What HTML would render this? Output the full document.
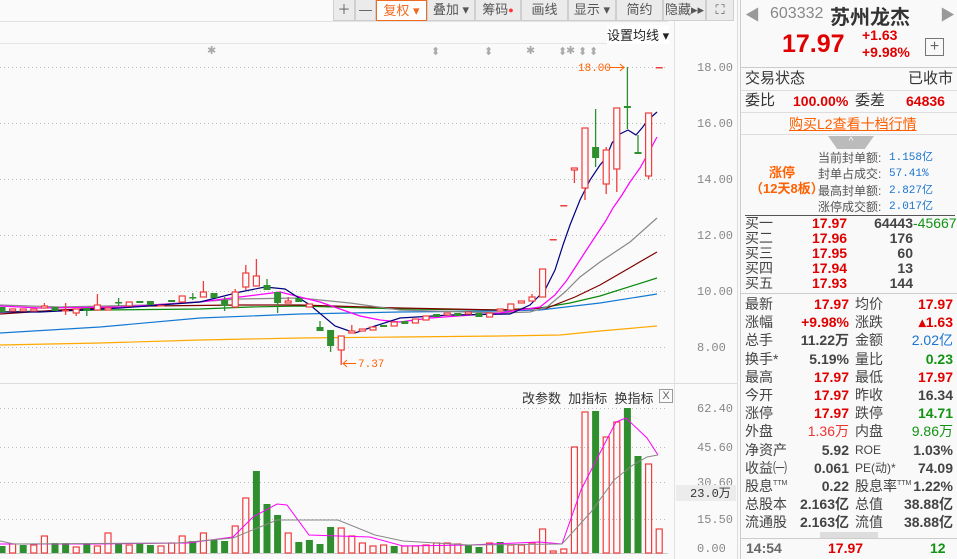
<!DOCTYPE html>
<html><head><meta charset="utf-8">
<style>
*{margin:0;padding:0;box-sizing:border-box}
body{width:957px;height:559px;overflow:hidden;background:#fafafa;font-family:"Liberation Sans","Noto Sans CJK SC",sans-serif;position:relative;color:#333}
.a{position:absolute;white-space:nowrap}
.tb{position:absolute;top:0;height:21px;background:#ebebeb;border:1px solid #cfcfcf;border-top:none;font-size:13px;color:#555;text-align:center;line-height:20px}
.r{color:#e00000}.g{color:#139313}.b{color:#1a74d0}.o{color:#ff6000}
.rp{font-size:14px;line-height:18px}
.m{font-family:"Liberation Mono","Noto Sans CJK SC",monospace}
.row{position:absolute;left:745px;width:208px;height:18px;font-size:14px;line-height:18px;color:#444;white-space:nowrap}
.row>span{position:absolute;top:0}
.row .sp{position:relative;top:-6px;font-size:7px;line-height:7px}
.l1{left:0}.v1{right:104px;font-weight:bold}.l2{left:110px}.v2{right:0;font-weight:bold}
</style></head><body>
<svg class="a" style="left:0;top:0" width="740" height="559">
<line x1="0" y1="21.5" x2="668" y2="21.5" stroke="#e2e2e2"/>
<line x1="0" y1="43.5" x2="668" y2="43.5" stroke="#e6e6e6"/>
<line x1="674.5" y1="21" x2="674.5" y2="559" stroke="#e2e2e2"/>
<line x1="0" y1="383.5" x2="740" y2="383.5" stroke="#dcdcdc"/>
<g stroke="#bbb" stroke-dasharray="1,3">
<line x1="0" y1="67.5" x2="668" y2="67.5"/><line x1="0" y1="123.5" x2="668" y2="123.5"/><line x1="0" y1="179.5" x2="668" y2="179.5"/><line x1="0" y1="235.5" x2="668" y2="235.5"/><line x1="0" y1="291.5" x2="668" y2="291.5"/><line x1="0" y1="347.5" x2="668" y2="347.5"/>
<line x1="0" y1="408.5" x2="668" y2="408.5"/><line x1="0" y1="447.5" x2="668" y2="447.5"/><line x1="0" y1="482.5" x2="668" y2="482.5"/><line x1="0" y1="519.5" x2="668" y2="519.5"/>
</g>
<line x1="0" y1="553.5" x2="668" y2="553.5" stroke="#ccc"/>
<g fill="none" stroke-width="1.2">
<polyline stroke="#ffa800" points="0,345 100,343 200,340 300,338 400,337 500,336 560,335 600,331 657,326"/>
<polyline stroke="#1479d4" points="0,333 100,327 200,318 300,314 400,312 500,311 540,310 600,303 657,294"/>
<polyline stroke="#0a8a0a" points="0,312 100,310 200,309 250,307 300,306 400,309 500,310 540,308 570,303 600,296 657,278"/>
<polyline stroke="#800000" points="0,314 60,310 150,306 240,305 300,305 400,308 500,310 547,308 575,297 600,285 657,252"/>
<polyline stroke="#888" points="0,305 60,307 150,305 240,299 300,298 350,303 400,310 500,313 530,312 547,307 565,292 580,277 600,262 630,242 657,218"/>
<polyline stroke="#ff00ff" points="0,306 40,308 120,307 200,302 240,297 280,292 320,302 360,316 380,320 400,322 430,318 500,313 540,307 555,295 567,280 580,260 593,240 605,222 613,208 622,195 630,182 640,168 650,150 657,137"/>
<polyline stroke="#000080" points="0,312 40,312 120,308 200,302 240,292 265,287 285,289 310,305 335,326 355,333 375,326 400,318 450,315 510,314 530,305 545,290 555,270 563,245 570,225 580,200 590,180 600,165 606,158 612,143 620,134 628,130 636,135 642,128 648,120 657,112"/>
</g>
<g id="cd"></g>
<g id="vb"></g>
<polyline fill="none" stroke="#ff00ff" points="0,544 94,544 188,543 233,537 253,517 277,504 287,505 309,535 338,536 370,537 403,546 469,545 539,542 562,544 581,490 605,443 616,422 626,418 647,438 658,455"/>
<polyline fill="none" stroke="#888" points="0,541 14,544 178,543 233,538 277,520 338,520 375,535 403,541 469,545 562,544 591,512 614,480 633,465 647,457 658,455"/>
<g fill="#aaa" font-size="11">
<text x="207" y="54">✱</text><text x="431" y="55">⬍</text><text x="484" y="55">⬍</text><text x="526" y="54">✱</text><text x="558" y="55">⬍</text><text x="566" y="54">✱</text><text x="578" y="55">⬍</text><text x="589" y="55">⬍</text>
</g>
<text x="578" y="71" fill="#ff6000" font-size="11" font-family="Liberation Mono">18.00</text>
<path d="M610 67.5H624M620 64L624 67.5L620 71" stroke="#ff6000" fill="none"/>
<path d="M343 363.5H356M347 360L343 363.5L347 367" stroke="#ff6000" fill="none"/>
<text x="358" y="367" fill="#ff6000" font-size="11" font-family="Liberation Mono">7.37</text>
<g fill="#888" font-size="12" font-family="Liberation Mono">
<text x="697" y="71">18.00</text><text x="697" y="127">16.00</text><text x="697" y="183">14.00</text><text x="697" y="239">12.00</text><text x="697" y="295">10.00</text><text x="697" y="351">8.00</text>
<text x="697" y="412">62.40</text><text x="697" y="451">45.60</text><text x="697" y="486">30.60</text><text x="697" y="523">15.50</text><text x="697" y="552">0.00</text>
</g>
<rect x="676" y="485" width="60" height="16" fill="#ececec"/>
<text x="690" y="497" fill="#333" font-size="12" font-family="Liberation Mono">23.0万</text>
</svg>
<div class="tb" style="left:333px;width:22px">＋</div>
<div class="tb" style="left:355px;width:21px">—</div>
<div class="tb" style="left:376px;width:51px;background:#fff;border:1px solid #f06a20;color:#f06a20">复权 ▾</div>
<div class="tb" style="left:427px;width:48px">叠加 ▾</div>
<div class="tb" style="left:475px;width:46px">筹码<span style="color:#f33;font-size:9px;vertical-align:top">●</span></div>
<div class="tb" style="left:521px;width:47px">画线</div>
<div class="tb" style="left:568px;width:48px">显示 ▾</div>
<div class="tb" style="left:616px;width:47px">简约</div>
<div class="tb" style="left:663px;width:43px">隐藏▸▸</div>
<div class="tb" style="left:706px;width:28px">⛶</div>
<div class="a" style="left:607px;top:25px;font-size:13px;color:#222;background:#fff">设置均线 ▾</div>
<div class="a" style="left:522px;top:388px;font-size:13px;color:#333">改参数&nbsp; 加指标&nbsp; 换指标</div>
<div class="a" style="left:659px;top:389px;width:14px;height:14px;border:1px solid #999;font-size:11px;line-height:12px;text-align:center;color:#666">X</div>
<div class="a" style="left:737px;top:0;width:220px;height:559px;background:#f9f9f9;border-left:1px solid #ddd"></div>
<div class="a" style="left:740px;top:0;width:1px;height:559px;background:#ccc"></div>
<div class="a" style="left:745px;top:4px;font-size:15px;color:#999">◀</div>
<div class="a" style="left:940px;top:4px;font-size:15px;color:#999">▶</div>
<div class="a" style="left:770px;top:5px;font-size:16px;color:#888">603332</div>
<div class="a" style="left:830px;top:1px;font-size:20px;font-weight:bold;color:#333">苏州龙杰</div>
<div class="a r" style="left:782px;top:30px;font-size:25px;font-weight:bold">17.97</div>
<div class="a r" style="left:862px;top:27px;font-size:14px;font-weight:bold">+1.63</div>
<div class="a r" style="left:862px;top:44px;font-size:14px;font-weight:bold">+9.98%</div>
<div class="a" style="left:925px;top:38px;width:19px;height:18px;border:1px solid #777;color:#666;font-size:16px;line-height:15px;text-align:center">+</div>
<div class="a" style="left:741px;top:67px;width:216px;height:1px;background:#ccc"></div>
<div class="a rp" style="left:745px;top:70px;font-size:15px">交易状态</div>
<div class="a rp" style="left:908px;top:70px;font-size:15px">已收市</div>
<div class="a" style="left:741px;top:90px;width:216px;height:1px;background:#ddd"></div>
<div class="a rp" style="left:745px;top:92px;font-size:15px">委比</div>
<div class="a rp r" style="left:793px;top:92px;font-weight:bold">100.00%</div>
<div class="a rp" style="left:855px;top:92px;font-size:15px">委差</div>
<div class="a rp r" style="left:906px;top:92px;font-weight:bold">64836</div>
<div class="a" style="left:741px;top:112px;width:216px;height:1px;background:#ddd"></div>
<div class="a o" style="left:789px;top:114px;font-size:14px;text-decoration:underline">购买L2查看十档行情</div>
<div class="a" style="left:741px;top:134px;width:216px;height:1px;background:#ddd"></div>
<div class="a" style="left:828px;top:136px;width:46px;height:13px;background:#bbb;clip-path:polygon(0 0,100% 0,80% 100%,20% 100%);color:#fff;font-size:10px;text-align:center;line-height:12px">^</div>
<div class="a o" style="left:769px;top:162px;font-size:13px;font-weight:bold">涨停</div>
<div class="a o" style="left:750px;top:178px;font-size:13px;font-weight:bold">（12天8板）</div>
<div class="a" style="left:818px;top:150px;font-size:12px;line-height:16.3px;color:#555">当前封单额:<br>封单占成交:<br>最高封单额:<br>涨停成交额:</div>
<div class="a b m" style="left:889px;top:150px;font-size:11px;line-height:16.3px">1.158亿<br>57.41%<br>2.827亿<br>2.017亿</div>
<div class="a" style="left:745px;top:215px;width:210px;height:1px;background:#555"></div>
<div class="a" style="left:745px;top:216px;font-size:14px;line-height:15px;color:#444">买一<br>买二<br>买三<br>买四<br>买五</div>
<div class="a r" style="left:812px;top:216px;font-size:14px;line-height:15px;font-weight:bold">17.97<br>17.96<br>17.95<br>17.94<br>17.93</div>
<div class="a" style="left:873px;top:216px;font-size:14px;line-height:15px;font-weight:bold;color:#444;text-align:right;width:40px">64443<br>176<br>60<br>13<br>144</div>
<div class="a g" style="left:913px;top:216px;font-size:14px;line-height:15px">-45667</div>
<div class="a" style="left:741px;top:293px;width:216px;height:1px;background:#ccc"></div>
<div class="row" style="top:295px"><span class="l1">最新</span><span class="v1 r">17.97</span><span class="l2">均价</span><span class="v2 r">17.97</span></div>
<div class="row" style="top:313px"><span class="l1">涨幅</span><span class="v1 r">+9.98%</span><span class="l2">涨跌</span><span class="v2 r">▴1.63</span></div>
<div class="row" style="top:331px"><span class="l1">总手</span><span class="v1">11.22万</span><span class="l2">金额</span><span class="v2 b" style="font-weight:normal">2.02亿</span></div>
<div class="row" style="top:350px"><span class="l1">换手*</span><span class="v1">5.19%</span><span class="l2">量比</span><span class="v2 g">0.23</span></div>
<div class="row" style="top:368px"><span class="l1">最高</span><span class="v1 r">17.97</span><span class="l2">最低</span><span class="v2 r">17.97</span></div>
<div class="row" style="top:386px"><span class="l1">今开</span><span class="v1 r">17.97</span><span class="l2">昨收</span><span class="v2">16.34</span></div>
<div class="row" style="top:404px"><span class="l1">涨停</span><span class="v1 r">17.97</span><span class="l2">跌停</span><span class="v2 g">14.71</span></div>
<div class="row" style="top:422px"><span class="l1">外盘</span><span class="v1" style="color:#e33;font-weight:normal">1.36万</span><span class="l2">内盘</span><span class="v2 g" style="font-weight:normal">9.86万</span></div>
<div class="row" style="top:441px"><span class="l1">净资产</span><span class="v1">5.92</span><span class="l2" style="font-size:12px">ROE</span><span class="v2">1.03%</span></div>
<div class="row" style="top:459px"><span class="l1">收益㈠</span><span class="v1">0.061</span><span class="l2" style="font-size:12px">PE(动)*</span><span class="v2">74.09</span></div>
<div class="row" style="top:477px"><span class="l1">股息<span class="sp">TTM</span></span><span class="v1">0.22</span><span class="l2">股息率<span class="sp">TTM</span></span><span class="v2">1.22%</span></div>
<div class="row" style="top:495px"><span class="l1">总股本</span><span class="v1">2.163亿</span><span class="l2">总值</span><span class="v2">38.88亿</span></div>
<div class="row" style="top:513px"><span class="l1">流通股</span><span class="v1">2.163亿</span><span class="l2">流值</span><span class="v2">38.88亿</span></div>
<div class="a" style="left:820px;top:532px;width:58px;height:6px;background:#ddd"></div>
<div class="a" style="left:741px;top:538px;width:216px;height:1px;background:#ccc"></div>
<div class="a" style="left:746px;top:540px;font-size:14px;font-weight:bold;color:#666">14:54</div>
<div class="a r" style="left:828px;top:540px;font-size:14px;font-weight:bold">17.97</div>
<div class="a g" style="left:930px;top:540px;font-size:14px;font-weight:bold">12</div>
<script>
var C=[["g",307,312],["r",309,311],["r",309,311],["r",309,311],["r",306,308,303],["g",307,311],["r",310,311,303,315],["r",309,313,0,316],["g",308,311,0,316],["r",305,310,294],["r",308,310],["g",302,303,298,306],["r",302,306],["g",301,303],["g",301,305],["r",305,306],["g",300,302],["r",296,302],["g",297,298,293,300],["r",292,297,281],["g",293,298],["g",300,306,297,311],["r",292,307,289],["r",273,287,265,290],["r",276,286,259],["g",285,290,279],["g",292,303,0,313],["r",301,303,297],["g",298,302],["r",304,307],["g",327,331,321],["g",330,346,0,352],["r",336,350,0,365],["r",331,333,325],["r",329,331],["r",327,330],["g",325,327],["r",322,326],["g",321,324],["r",319,323],["r",316,320],["g",314,317],["r",313,315],["g",313,316],["r",312,314],["g",313,317],["r",313,317],["r",309,311],["r",304,310],["r",301,303],["r",297,301,294],["r",269,297],["r",239,240],["r",205,206],["r",168,170,0,183],["r",128,188,0,200],["g",147,158,109,167],["r",150,184,147,194],["r",108,169,0,192],["g",106,108,67,129],["g",152,154,135,0],["r",113,176,0,179],["r",67,68]];
var V=[["g",546],["r",544],["g",545],["r",545],["r",536],["g",543],["g",543],["r",547],["g",543],["r",546],["r",533],["g",543],["r",545],["g",544],["g",545],["r",546],["r",543],["r",536],["g",541],["r",533],["g",540],["g",541],["r",526],["r",498],["g",471],["g",504],["g",515],["r",533],["g",542],["g",540],["g",544],["g",527],["r",528],["r",536],["r",543],["r",546],["r",545],["g",546],["r",546],["r",546],["r",545],["r",543],["r",543],["r",544],["g",545],["g",547],["r",543],["g",542],["r",545],["r",545],["r",543],["r",529],["r",551],["r",549],["r",447],["r",412],["g",411],["r",437],["r",422],["g",408],["g",456],["r",464],["r",529]];
var RC="#f03c3c",GC="#2f8f2f",s="",v="";
C.forEach(function(c,i){var x=2+i*10.6,col=c[0]=="r"?RC:GC,t=c[1],b=c[2],h=c[3]||t,l=c[4]||b;
s+='<line x1="'+x+'" y1="'+h+'" x2="'+x+'" y2="'+l+'" stroke="'+col+'" stroke-width="1.3"/>';
if(b-t<2)s+='<rect x="'+(x-3.5)+'" y="'+t+'" width="7" height="1.5" fill="'+col+'"/>';
else if(c[0]=="r")s+='<rect x="'+(x-3)+'" y="'+t+'" width="6" height="'+(b-t)+'" fill="#fafafa" stroke="'+col+'" stroke-width="1.2"/>';
else s+='<rect x="'+(x-3.5)+'" y="'+t+'" width="7" height="'+(b-t)+'" fill="'+col+'"/>';});
V.forEach(function(c,i){var x=2+i*10.6,t=c[1];
if(c[0]=="r")v+='<rect x="'+(x-3)+'" y="'+t+'" width="6" height="'+(553-t)+'" fill="none" stroke="'+RC+'" stroke-width="1.2"/>';
else v+='<rect x="'+(x-3.5)+'" y="'+t+'" width="7" height="'+(553-t)+'" fill="'+GC+'"/>';});
document.getElementById("cd").innerHTML=s;document.getElementById("vb").innerHTML=v;
</script>
</body></html>
